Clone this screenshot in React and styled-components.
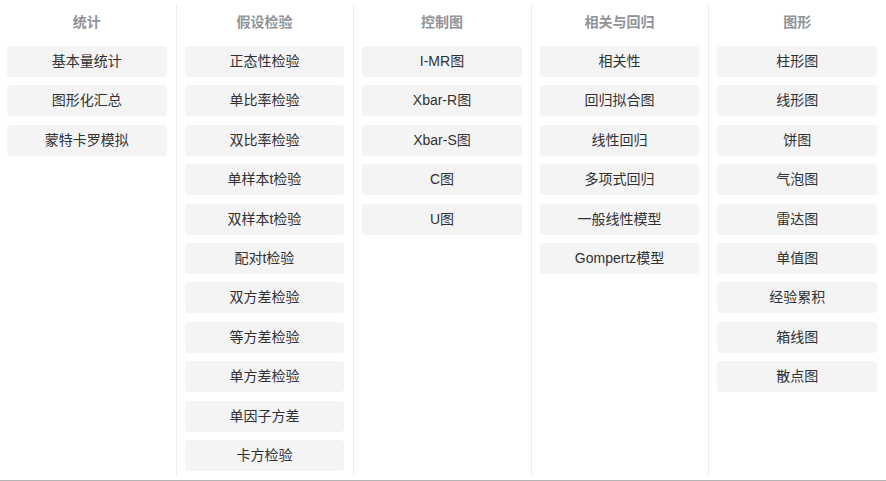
import React from 'react';
import styled, { createGlobalStyle } from 'styled-components';

const GlobalStyle = createGlobalStyle`
  html, body {
    margin: 0;
    padding: 0;
    background: #fff;
    overflow: hidden;
  }
  body {
    font-family: "Liberation Sans", "Noto Sans CJK SC", sans-serif;
  }
`;

const Page = styled.div`
  width: 886px;
  height: 481px;
  border-bottom: 1px solid #b4b4b4;
  box-sizing: border-box;
  overflow: hidden;
`;

const Columns = styled.div`
  display: flex;
  margin-left: -1px;
  width: 887px;
  padding-top: 4px;
`;

const Column = styled.div`
  flex: 1;
  min-width: 0;
  height: 471px;
  padding: 0 9px 0 8px;
  box-sizing: border-box;
  border-right: ${(p) => (p.$last ? 'none' : '1px solid #ebeef0')};
`;

const Title = styled.div`
  height: 36px;
  line-height: 36px;
  margin-bottom: 6px;
  text-align: center;
  font-size: 14px;
  font-weight: bold;
  color: #909399;
`;

const List = styled.div`
  display: flex;
  flex-direction: column;
  gap: 8.4px;
`;

const Item = styled.div`
  height: 31px;
  line-height: 31px;
  border-radius: 4px;
  background: #f4f4f5;
  text-align: center;
  font-size: 14px;
  color: #303133;
  cursor: pointer;
  white-space: nowrap;
`;

const groups = [
  { title: '统计', items: ['基本量统计', '图形化汇总', '蒙特卡罗模拟'] },
  {
    title: '假设检验',
    items: [
      '正态性检验',
      '单比率检验',
      '双比率检验',
      '单样本t检验',
      '双样本t检验',
      '配对t检验',
      '双方差检验',
      '等方差检验',
      '单方差检验',
      '单因子方差',
      '卡方检验',
    ],
  },
  { title: '控制图', items: ['I-MR图', 'Xbar-R图', 'Xbar-S图', 'C图', 'U图'] },
  {
    title: '相关与回归',
    items: ['相关性', '回归拟合图', '线性回归', '多项式回归', '一般线性模型', 'Gompertz模型'],
  },
  {
    title: '图形',
    items: ['柱形图', '线形图', '饼图', '气泡图', '雷达图', '单值图', '经验累积', '箱线图', '散点图'],
  },
];

const App = () => {
  return (
    <Page>
      <GlobalStyle />
      <Columns>
        {groups.map((g, i) => (
          <Column key={g.title} $last={i === groups.length - 1}>
            <Title>{g.title}</Title>
            <List>
              {g.items.map((it) => (
                <Item key={it}>{it}</Item>
              ))}
            </List>
          </Column>
        ))}
      </Columns>
    </Page>
  );
};

export default App;
